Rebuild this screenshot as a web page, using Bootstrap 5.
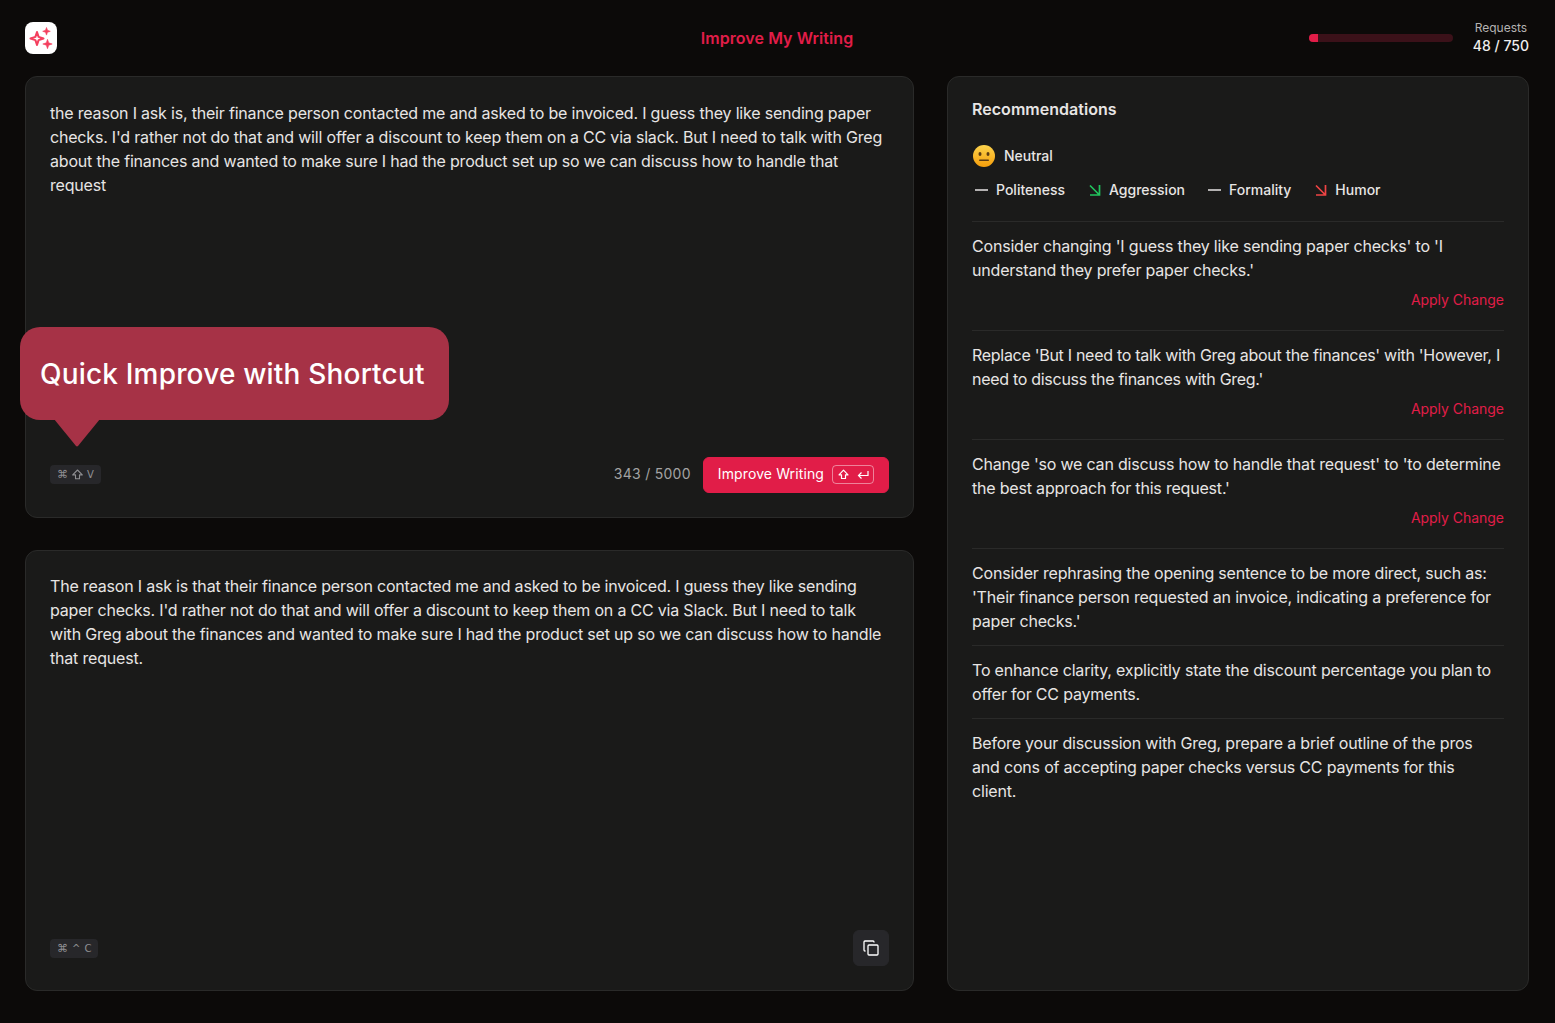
<!DOCTYPE html>
<html lang="en">
<head>
    <meta charset="UTF-8">
    <meta name="viewport" content="width=device-width, initial-scale=1.0">
    <title>Improve My Writing</title>
    <link href="https://cdn.jsdelivr.net/npm/bootstrap@5.3.0/dist/css/bootstrap.min.css" rel="stylesheet">
    <style>
        html, body { height: 100%; }
        body {
            background: #0c0a09;
            color: #e7e5e4;
            font-family: "Inter", "Liberation Sans", sans-serif;
            font-size: 16px;
            line-height: 24px;
            letter-spacing: -0.012em;
        }
        .app-shell { height: 1023px; padding: 0 26px 32px 25px; }
        .app-top { height: 76px; position: relative; }
        .app-logo { width: 32px; height: 32px; border-radius: 8px; background: #fff; }
        .app-title { position: absolute; left: 0; right: 0; top: 26px; text-align: center; color: #e11d48; font-weight: 600; letter-spacing: 0.004em; }
        .usage-track { width: 144px; height: 8px; background: #3b1119; border-radius: 4px; overflow: hidden; margin-right: 20px; }
        .usage-fill { height: 100%; background: #e11d48; }
        .usage-block { margin-bottom: 2px; }
        .usage-label { font-size: 12px; line-height: 16px; margin-bottom: 1px; color: #b5b3b2; letter-spacing: 0; }
        .usage-count { font-size: 14px; line-height: 18px; font-weight: 500; color: #f0efee; letter-spacing: 0; }
        .app-main { display: grid; grid-template-columns: 889px 582px; gap: 33px; height: 915px; }
        .pane {
            background: #1a1a19;
            border: 1px solid #2a2a29;
            border-radius: 12px;
            padding: 24px;
        }
        .pane-rec, .pane-output { padding-top: 23px; }
        .pane-stack { position: relative; display: grid; grid-template-rows: 1fr 1fr; gap: 32px; min-height: 0; }
        .keys {
            display: inline-flex;
            align-items: center;
            gap: 4px;
            background: #27272a;
            color: #8f8f92;
            border-radius: 4px;
            font-family: "DejaVu Sans", sans-serif;
            font-size: 10px;
            line-height: 19px;
            height: 19px;
            padding: 0 7px;
            letter-spacing: 0;
        }
        .keys-cmd { font-size: 11px; }
        .count-text { color: #a3a3a3; font-size: 14px; letter-spacing: 0.02em; margin-top: -2px; }
        .improve-btn {
            --bs-btn-bg: #e11d48;
            --bs-btn-border-color: #e11d48;
            --bs-btn-hover-bg: #be123c;
            --bs-btn-hover-border-color: #be123c;
            --bs-btn-color: #fff;
            --bs-btn-hover-color: #fff;
            --bs-btn-font-size: 14px;
            --bs-btn-border-radius: 6px;
            height: 36px;
            padding: 0 14px;
            letter-spacing: 0.008em;
        }
        .improve-label { margin-top: -2px; }
        .btn-keys {
            width: 42px;
            height: 19px;
            border: 1px solid rgba(255,255,255,.45);
            border-radius: 4px;
        }
        .copy-btn {
            --bs-btn-bg: #27272a;
            --bs-btn-border-color: #27272a;
            --bs-btn-hover-bg: #333336;
            --bs-btn-hover-border-color: #333336;
            --bs-btn-border-radius: 6px;
            width: 36px;
            height: 36px;
            padding: 0;
        }
        .shortcut-tip {
            position: absolute;
            left: -5px;
            top: 251px;
            width: 429px;
            height: 93px;
            background: #a63246;
            border-radius: 20px;
            color: #fff;
            font-size: 28px;
            font-weight: 500;
            line-height: 94px;
            padding-left: 20px;
            letter-spacing: 0.0065em;
        }
        .shortcut-tip svg { position: absolute; left: 34px; top: 92px; }
        .rec-title { font-weight: 600; margin-bottom: 26px; line-height: 18px; margin-top: 0; font-size: 16px; letter-spacing: 0.002em; }
        .rec-small { font-size: 14px; font-weight: 500; letter-spacing: 0; }
        .rec-metrics { gap: 20px; margin-top: 10px; margin-bottom: 19px; }
        .rec-item { border-top: 1px solid #2a2a29; padding: 12px 0; }
        .rec-tight { letter-spacing: -0.018em; }
        .apply-link { display: block; text-align: right; color: #e11d48; font-size: 14px; line-height: 36px; height: 36px; text-decoration: none; letter-spacing: -0.002em; }
    </style>
</head>
<body>
    <div class="app-shell">
        <header class="app-top d-flex align-items-center justify-content-between">
            <div class="app-logo">
                <svg width="32" height="32" viewBox="0 0 32 32" fill="none">
                    <path d="M12 10l1.600 4.900 4.900 1.600-4.900 1.600-1.600 4.900-1.600-4.900-4.900-1.600 4.900-1.600z" stroke="#f43f5e" stroke-width="2" stroke-linejoin="round"/>
                    <path d="M21.500 5.500l1 2.800 2.800 1-2.800 1-1 2.800-1-2.800-2.800-1 2.800-1z" fill="#f43f5e" stroke="#f43f5e" stroke-width=".6"/>
                    <path d="M22.500 17.300l1.200 3.500 3.500 1.200-3.500 1.200-1.200 3.500-1.200-3.500-3.500-1.200 3.500-1.200z" fill="#f43f5e" stroke="#f43f5e" stroke-width=".6"/>
                </svg>
            </div>
            <div class="app-title">Improve My Writing</div>
            <div class="d-flex align-items-center">
                <div class="usage-track"><div class="usage-fill" style="width: 6.4%"></div></div>
                <div class="text-center usage-block">
                    <div class="usage-label">Requests</div>
                    <div class="usage-count">48 / 750</div>
                </div>
            </div>
        </header>

        <main class="app-main">
            <div class="pane-stack">
                <section class="pane d-flex flex-column justify-content-between">
                    <div>the reason I ask is, their finance person contacted me and asked to be invoiced. I guess they like sending paper checks. I'd rather not do that and will offer a discount to keep them on a CC via slack. But I need to talk with Greg about the finances and wanted to make sure I had the product set up so we can discuss how to handle that request</div>
                    <div class="d-flex align-items-center justify-content-between">
                        <span class="keys"><span class="keys-cmd">⌘</span>
                            <svg width="11" height="11" viewBox="0 0 11 11" fill="none" stroke="#8f8f92" stroke-width="1.100" stroke-linejoin="round"><path d="M5.500 1L10.300 5.900H7.500V9.700H3.500V5.900H.7z"/></svg>
                            <span>V</span></span>
                        <div class="d-flex align-items-center gap-2">
                            <span class="count-text me-1">343 / 5000</span>
                            <button class="btn improve-btn d-flex align-items-center gap-2" type="button">
                                <span class="improve-label">Improve Writing</span>
                                <span class="btn-keys d-flex align-items-center justify-content-center gap-2">
                                    <svg width="11" height="11" viewBox="0 0 11 11" fill="none" stroke="#fff" stroke-width="1.200" stroke-linejoin="round"><path d="M5.500 1.200L10 5.800H7.500V9.500H3.500V5.800H1z"/></svg>
                                    <svg width="12" height="10" viewBox="0 0 12 10" fill="none" stroke="#fff" stroke-width="1.200"><path d="M11 1v4.500H1.500M4.500 2.500l-3 3 3 3"/></svg>
                                </span>
                            </button>
                        </div>
                    </div>
                </section>
                <section class="pane pane-output d-flex flex-column justify-content-between">
                    <div>The reason I ask is that their finance person contacted me and asked to be invoiced. I guess they like sending paper checks. I'd rather not do that and will offer a discount to keep them on a CC via Slack. But I need to talk with Greg about the finances and wanted to make sure I had the product set up so we can discuss how to handle that request.</div>
                    <div class="d-flex align-items-center justify-content-between">
                        <span class="keys"><span class="keys-cmd">⌘</span><span>^</span><span>C</span></span>
                        <button class="btn copy-btn d-flex align-items-center justify-content-center" type="button" aria-label="Copy">
                            <svg width="16" height="16" viewBox="0 0 16 16" fill="none" stroke="#fff" stroke-width="1.300"><rect x="5" y="5" width="10" height="10" rx="1"/><path d="M11 2.500V2a1 1 0 0 0-1-1H2a1 1 0 0 0-1 1v8a1 1 0 0 0 1 1h.5"/></svg>
                        </button>
                    </div>
                </section>
                <div class="shortcut-tip">
                    Quick Improve with Shortcut
                    <svg width="46" height="29" viewBox="0 0 46 29"><path d="M0 0H46L24 27a1.500 1.500 0 0 1-2 0z" fill="#a63246"/></svg>
                </div>
            </div>

            <aside class="pane pane-rec">
                <h2 class="rec-title">Recommendations</h2>
                <div class="d-flex align-items-center gap-2 rec-small">
                    <svg width="24" height="24" viewBox="0 0 24 24">
                        <defs><linearGradient id="faceFill" x1="0" y1="0" x2="0" y2="1"><stop offset="0" stop-color="#fcd34d"/><stop offset="1" stop-color="#f59e0b"/></linearGradient></defs>
                        <circle cx="12" cy="12" r="11" fill="url(#faceFill)"/>
                        <ellipse cx="8" cy="10" rx="1.500" ry="2" fill="#5b3a12"/>
                        <ellipse cx="16" cy="10" rx="1.500" ry="2" fill="#5b3a12"/>
                        <rect x="7" y="15.500" width="10" height="1.500" rx=".7" fill="#5b3a12"/>
                    </svg>
                    <span>Neutral</span>
                </div>
                <div class="d-flex align-items-center rec-metrics rec-small">
                    <div class="d-flex align-items-center gap-2"><svg width="16" height="16" viewBox="0 0 16 16" stroke="#e7e5e4" stroke-width="1.500"><path d="M3 8h13"/></svg>Politeness</div>
                    <div class="d-flex align-items-center gap-2"><svg width="16" height="16" viewBox="0 0 16 16" fill="none" stroke="#22c55e" stroke-width="1.700"><path d="M5 3.500l9 9M14.500 3v10H5"/></svg>Aggression</div>
                    <div class="d-flex align-items-center gap-2"><svg width="16" height="16" viewBox="0 0 16 16" stroke="#e7e5e4" stroke-width="1.500"><path d="M3 8h13"/></svg>Formality</div>
                    <div class="d-flex align-items-center gap-2"><svg width="16" height="16" viewBox="0 0 16 16" fill="none" stroke="#ef4444" stroke-width="1.700"><path d="M5 3.500l9 9M14.500 3v10H5"/></svg>Humor</div>
                </div>
                <div class="rec-item">Consider changing 'I guess they like sending paper checks' to 'I understand they prefer paper checks.'<a class="apply-link" href="#">Apply Change</a></div>
                <div class="rec-item rec-tight">Replace 'But I need to talk with Greg about the finances' with 'However, I need to discuss the finances with Greg.'<a class="apply-link" href="#">Apply Change</a></div>
                <div class="rec-item">Change 'so we can discuss how to handle that request' to 'to determine the best approach for this request.'<a class="apply-link" href="#">Apply Change</a></div>
                <div class="rec-item">Consider rephrasing the opening sentence to be more direct, such as: 'Their finance person requested an invoice, indicating a preference for paper checks.'</div>
                <div class="rec-item">To enhance clarity, explicitly state the discount percentage you plan to offer for CC payments.</div>
                <div class="rec-item">Before your discussion with Greg, prepare a brief outline of the pros and cons of accepting paper checks versus CC payments for this<br>client.</div>
            </aside>
        </main>
    </div>
    <script src="https://cdn.jsdelivr.net/npm/bootstrap@5.3.0/dist/js/bootstrap.bundle.min.js"></script>
</body>
</html>
